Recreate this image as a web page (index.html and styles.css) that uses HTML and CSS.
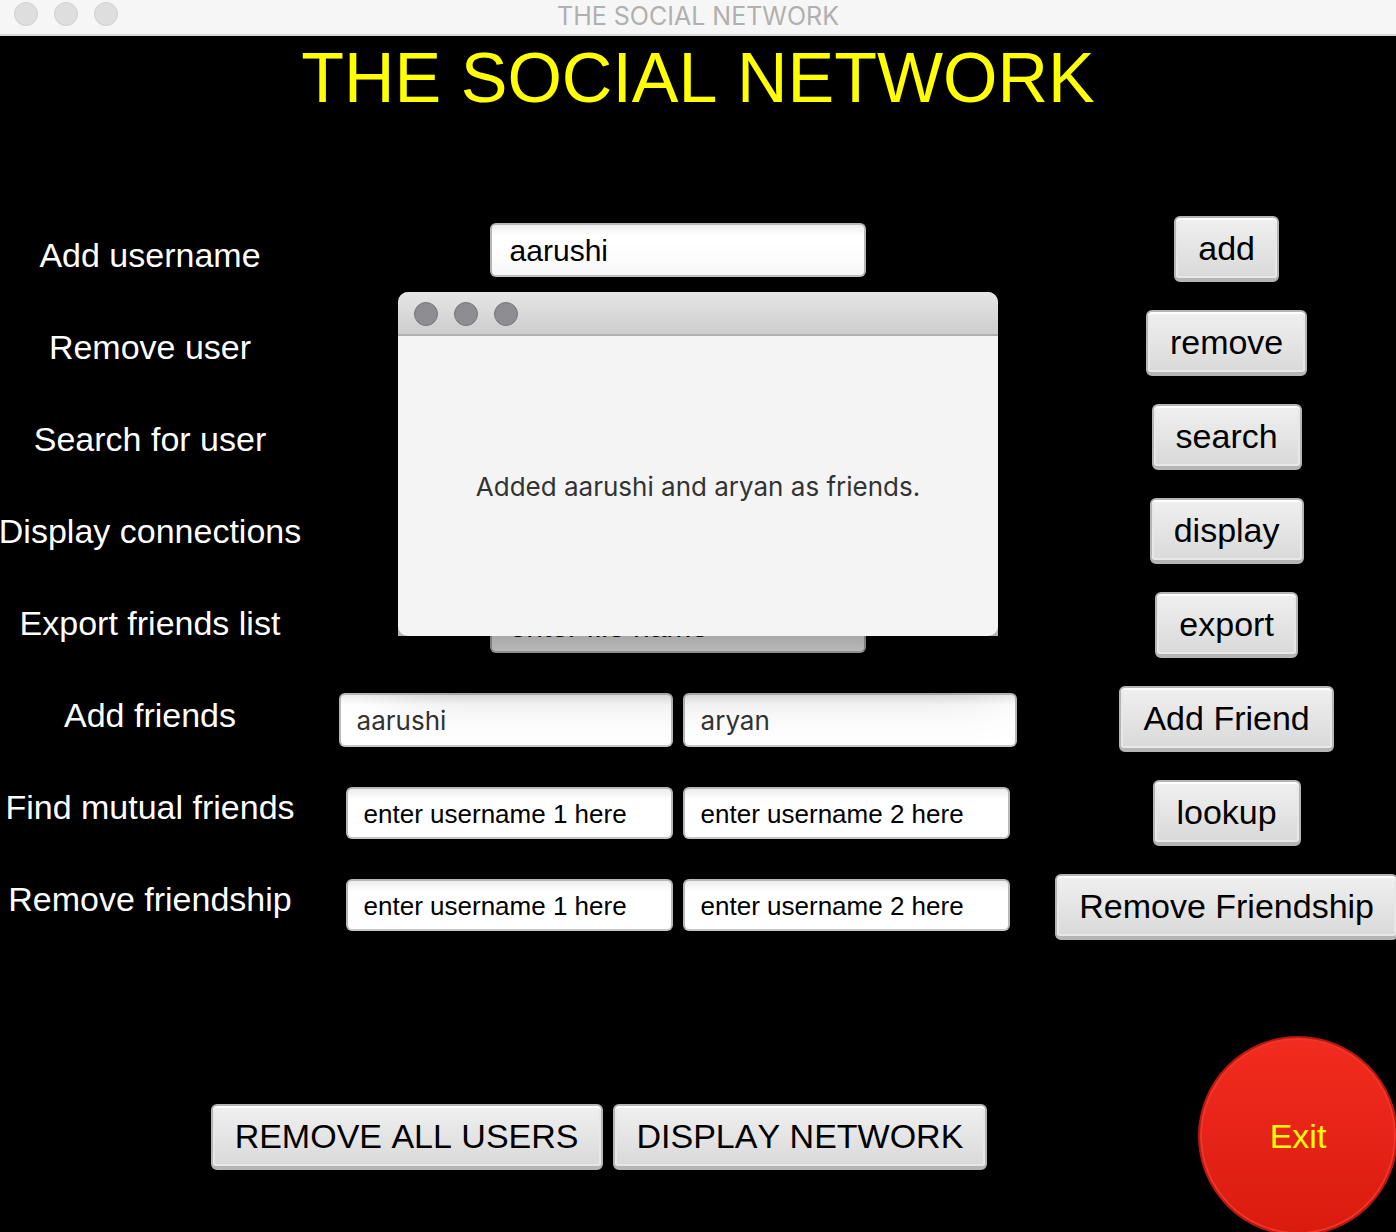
FILE: index.html
```html
<!DOCTYPE html>
<html lang="en">
<head>
<meta charset="utf-8">
<meta name="viewport" content="width=device-width, initial-scale=1">
<title>THE SOCIAL NETWORK</title>
<link rel="stylesheet" href="styles.css">
</head>
<body>
<div class="window">
  <header class="titlebar">
    <div class="lights"><span class="light"></span><span class="light"></span><span class="light"></span></div>
    <span class="titlebar-text">THE SOCIAL NETWORK</span>
  </header>
  <main class="content">
    <h1 class="heading">THE SOCIAL NETWORK</h1>
    <div class="panel">
      <div class="labels">
        <label for="add-user">Add username</label>
        <label for="remove-user">Remove user</label>
        <label for="search-user">Search for user</label>
        <label for="display-user">Display connections</label>
        <label for="export-file">Export friends list</label>
        <label id="friend-label" for="friend-1">Add friends</label>
        <label id="mutual-label" for="mutual-1">Find mutual friends</label>
        <label id="unfriend-label" for="unfriend-1">Remove friendship</label>
      </div>
      <div class="fields">
        <input class="field" id="add-user" type="text" value="aarushi">
        <input class="field" id="remove-user" type="text">
        <input class="field" id="search-user" type="text">
        <input class="field" id="display-user" type="text">
        <input class="field" id="export-file" type="text" value="enter file name">
        <div class="pair">
          <input class="field field-system" id="friend-1" type="text" value="aarushi">
          <input class="field field-system" id="friend-2" aria-labelledby="friend-label" type="text" value="aryan">
        </div>
        <div class="pair">
          <input class="field field-small" id="mutual-1" type="text" value="enter username 1 here">
          <input class="field field-small" id="mutual-2" aria-labelledby="mutual-label" type="text" value="enter username 2 here">
        </div>
        <div class="pair">
          <input class="field field-small" id="unfriend-1" type="text" value="enter username 1 here">
          <input class="field field-small" id="unfriend-2" aria-labelledby="unfriend-label" type="text" value="enter username 2 here">
        </div>
      </div>
      <div class="actions">
        <button class="button" type="button">add</button>
        <button class="button" type="button">remove</button>
        <button class="button" type="button">search</button>
        <button class="button" type="button">display</button>
        <button class="button" type="button">export</button>
        <button class="button" type="button">Add Friend</button>
        <button class="button" type="button">lookup</button>
        <button class="button" type="button">Remove Friendship</button>
      </div>
    </div>
    <footer class="footer">
      <div class="footer-actions">
        <button class="button" type="button">REMOVE ALL USERS</button>
        <button class="button" type="button">DISPLAY NETWORK</button>
      </div>
      <button class="exit" type="button">Exit</button>
    </footer>
  </main>
  <section class="dialog" role="dialog" aria-labelledby="dialog-message">
    <div class="dialog-bar">
      <div class="lights"><span class="light"></span><span class="light"></span><span class="light"></span></div>
    </div>
    <p class="dialog-message" id="dialog-message">Added aarushi and aryan as friends.</p>
  </section>
</div>
</body>
</html>
```
FILE: styles.css
```css
* {
  box-sizing: border-box;
}

body {
  margin: 0;
  background: #000;
  font-family: "Liberation Sans", Arial, sans-serif;
}

.window {
  position: relative;
  min-height: 100vh;
  max-height: 100vh;
  overflow: hidden;
}

/* Title bars */
.titlebar {
  display: grid;
  grid-template-columns: 1fr auto 1fr;
  height: 36px;
  padding: 0 14px;
  background: #f6f6f6;
  border-bottom: 2px solid #d6d6d6;
}

.titlebar-text {
  color: #b0b0b0;
  font: 25px/32px Inter, "Open Sans", sans-serif;
  font-kerning: none;
}

.lights {
  display: flex;
  gap: 16px;
  padding-top: 2px;
}

.light {
  width: 24px;
  height: 24px;
  border: 1px solid #cfcfcf;
  border-radius: 50%;
  background: #dedede;
}

/* Main form */
.heading {
  margin: 0;
  color: #ff0;
  font-size: 70px;
  font-weight: 400;
  font-kerning: none;
  line-height: 84px;
  text-align: center;
}

.panel {
  display: grid;
  grid-template-columns: 300px 1fr auto;
  align-items: start;
  margin-right: -2px;
  padding-top: 96px;
}

.labels,
.fields,
.actions {
  display: flex;
  flex-direction: column;
  align-items: center;
}

.labels {
  padding-top: 19px;
  gap: 52px;
  color: #fff;
  font-size: 34px;
  line-height: 40px;
  white-space: nowrap;
}

.fields {
  padding-top: 7px;
  gap: 40px;
}

.actions {
  gap: 28px;
}

.pair {
  display: flex;
  gap: 10px;
}

.field {
  width: 376px;
  height: 54px;
  padding: 2px 18px 0;
  border: 2px solid #b8b8b8;
  border-bottom-color: #c6c6c6;
  border-radius: 6px;
  background: linear-gradient(#ececec, #fff 10px);
  color: #000;
  font: 30px "Liberation Sans", Arial, sans-serif;
}

.field-system {
  width: 334px;
  padding: 0 16px;
  color: #333;
  font: 26px Inter, "Open Sans", sans-serif;
}

.field-small {
  width: 327px;
  height: 52px;
  padding: 2px 16px 0;
  font-size: 26px;
}

.button {
  height: 66px;
  padding: 0 22px;
  border: 2px solid #b5b5b5;
  border-bottom-width: 4px;
  border-radius: 6px;
  background: linear-gradient(#f0f0f0, #d9d9d9);
  box-shadow: inset 0 2px #fff, inset 0 0 0 2px #e8e8e8;
  color: #000;
  font: 34px "Liberation Sans", Arial, sans-serif;
  font-kerning: none;
  white-space: nowrap;
}

/* Footer */
.footer {
  display: flex;
  align-items: center;
  margin-right: -2px;
  padding-top: 96px;
}

.footer-actions {
  display: flex;
  flex: 1;
  justify-content: center;
  gap: 10px;
  padding-top: 2px;
}

.exit {
  width: 200px;
  height: 200px;
  border: 2px solid #b8180f;
  border-radius: 50%;
  background: linear-gradient(#f22c1f, #d91b0e);
  box-shadow: inset 0 0 0 2px #f0352a;
  color: #ff0;
  font: 34px "Liberation Sans", Arial, sans-serif;
}

/* Message dialog, floating over the form */
.dialog {
  position: absolute;
  top: 292px;
  left: 50%;
  display: flex;
  flex-direction: column;
  width: 600px;
  height: 344px;
  margin-left: -300px;
  overflow: hidden;
  border-radius: 10px 10px 0 0;
  background: #b4b4b4;
  box-shadow: 0 30px 70px rgba(0, 0, 0, 0.42);
}

.dialog-bar {
  height: 44px;
  padding: 8px 16px;
  border-bottom: 2px solid #b0b0b0;
  background: linear-gradient(#e6e6e6, #cdcdcd);
}

.dialog-bar .light {
  border-color: #77777b;
  background: #8e8d92;
}

.dialog-message {
  display: flex;
  flex: 1;
  align-items: center;
  justify-content: center;
  margin: 0;
  border-radius: 0 0 10px 10px;
  background: #f4f4f4;
  color: #333;
  font: 26px Inter, "Open Sans", sans-serif;
}
```
